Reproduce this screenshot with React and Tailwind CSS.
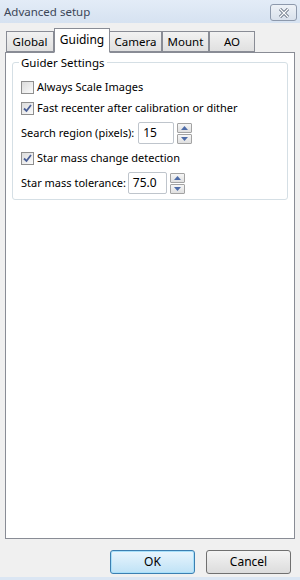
import React, { useState } from "react";

function Check({ checked, label, onChange }) {
  return (
    <label className="flex items-center gap-[3px] h-[21px] cursor-default">
      <span className="w-[13px] h-[13px] border border-[#8f8f8f] bg-gradient-to-br from-[#dcdcdc] to-[#fbfbfb] flex items-center justify-center">
        {checked && (
          <svg width="11" height="11" viewBox="0 0 11 11">
            <path d="M2 5.5 L4.5 8 L9 2" fill="none" stroke="#4a5f97" strokeWidth="1.8" />
          </svg>
        )}
      </span>
      <input type="checkbox" className="hidden" checked={checked} onChange={onChange} />
      <span>{label}</span>
    </label>
  );
}

function Spin({ value, w }) {
  return (
    <div className="flex items-center gap-[3px]">
      <div className={`${w} h-[22px] border border-[#bfc5cc] rounded-[2px] bg-white flex items-center px-[4px] text-[12px]`}>
        {value}
      </div>
      <div className="flex flex-col gap-[1px] w-[15px] h-[21px]">
        <div className="flex-1 flex items-center justify-center border border-[#a3a3a3] rounded-[1px] bg-gradient-to-b from-[#f6f6f6] to-[#e0e0e0]">
          <svg width="7" height="4" viewBox="0 0 7 4"><path d="M0 4 L3.5 0 L7 4Z" fill="#4e6ca8" /></svg>
        </div>
        <div className="flex-1 flex items-center justify-center border border-[#a3a3a3] rounded-[1px] bg-gradient-to-b from-[#f6f6f6] to-[#e0e0e0]">
          <svg width="7" height="4" viewBox="0 0 7 4"><path d="M0 0 L3.5 4 L7 0Z" fill="#4e6ca8" /></svg>
        </div>
      </div>
    </div>
  );
}

export default function App() {
  const [scale, setScale] = useState(false);
  const [fast, setFast] = useState(true);
  const [mass, setMass] = useState(true);
  const tabs = ["Global", "Guiding", "Camera", "Mount", "AO"];
  const tabW = ["w-[48px]", "w-[56px]", "w-[52px]", "w-[47px]", "w-[46px]"];

  return (
    <div className="w-[300px] h-[580px] flex flex-col bg-[#f0f0f0] text-[11px] text-black font-['Noto_Sans',sans-serif] overflow-hidden">
      {/* title bar */}
      <div className="h-[23px] flex items-center justify-between pl-[4px] pr-[3px] bg-gradient-to-b from-[#e3ecf7] to-[#d6e2f1]">
        <span className="text-[#3b4657] text-[11.5px]">Advanced setup</span>
        <div className="w-[27px] h-[17px] border border-[#8d99ac] rounded-[3px] bg-gradient-to-b from-[#eef2f7] to-[#d9e1ec] flex items-center justify-center mt-[2px]">
          <svg width="12" height="10" viewBox="0 0 12 10">
            <path d="M2 1 L10 9 M10 1 L2 9" stroke="#5a6678" strokeWidth="3" />
            <path d="M2 1 L10 9 M10 1 L2 9" stroke="#ffffff" strokeWidth="1.4" />
          </svg>
        </div>
      </div>

      {/* tabs */}
      <div className="flex items-end pl-[6px] mt-[5px] h-[24px] relative z-10 text-[11.5px]">
        {tabs.map((t, i) =>
          i === 1 ? (
            <div
              key={t}
              className={`${tabW[i]} h-[25px] -mb-[1px] border border-[#898c95] border-b-white bg-white flex items-start justify-center pt-[2px] text-[12px]`}
            >
              {t}
            </div>
          ) : (
            <div
              key={t}
              className={`${tabW[i]} h-[21px] border border-[#898c95] bg-gradient-to-b from-[#f2f2f2] to-[#e0e0e0] flex items-center justify-center ${i === 2 ? "border-l-0" : ""}`}
            >
              {t}
            </div>
          )
        )}
      </div>

      {/* panel */}
      <div className="mx-[5px] h-[487px] border border-[#898c95] bg-white px-[6px] pt-[2px]">
        <fieldset className="border border-[#d5dfe5] rounded-[3px] pl-[8px] pr-[6px] pb-[4px] h-[145px]">
          <legend className="px-[2px] -ml-[2px] leading-[15px] text-[11.5px]">Guider Settings</legend>
          <div className="flex flex-col mt-[7px]">
            <Check checked={scale} label="Always Scale Images" onChange={() => setScale(!scale)} />
            <Check checked={fast} label="Fast recenter after calibration or dither" onChange={() => setFast(!fast)} />
            <div className="flex items-center gap-[4px] mt-[2px] h-[24px]">
              <span>Search region (pixels):</span>
              <Spin value="15" w="w-[36px]" />
            </div>
            <div className="mt-[3px]">
              <Check checked={mass} label="Star mass change detection" onChange={() => setMass(!mass)} />
            </div>
            <div className="flex items-center gap-[2px] mt-[2px] h-[24px]">
              <span>Star mass tolerance:</span>
              <Spin value="75.0" w="w-[39px]" />
            </div>
          </div>
        </fieldset>
      </div>

      {/* buttons */}
      <div className="flex justify-end gap-[11px] pr-[9px] mt-[11px] text-[12px]">
        <button className="w-[85px] h-[24px] rounded-[3px] border border-[#3c7fb1] bg-gradient-to-b from-[#e9f5fd] to-[#bfe2f6] shadow-[inset_0_0_0_1px_#a8e0fa]">
          OK
        </button>
        <button className="w-[85px] h-[24px] rounded-[3px] border border-[#707070] bg-gradient-to-b from-[#f4f4f4] to-[#dcdcdc]">
          Cancel
        </button>
      </div>
      <div className="mt-auto h-[3px] bg-[#dbe6f3]" />
    </div>
  );
}
